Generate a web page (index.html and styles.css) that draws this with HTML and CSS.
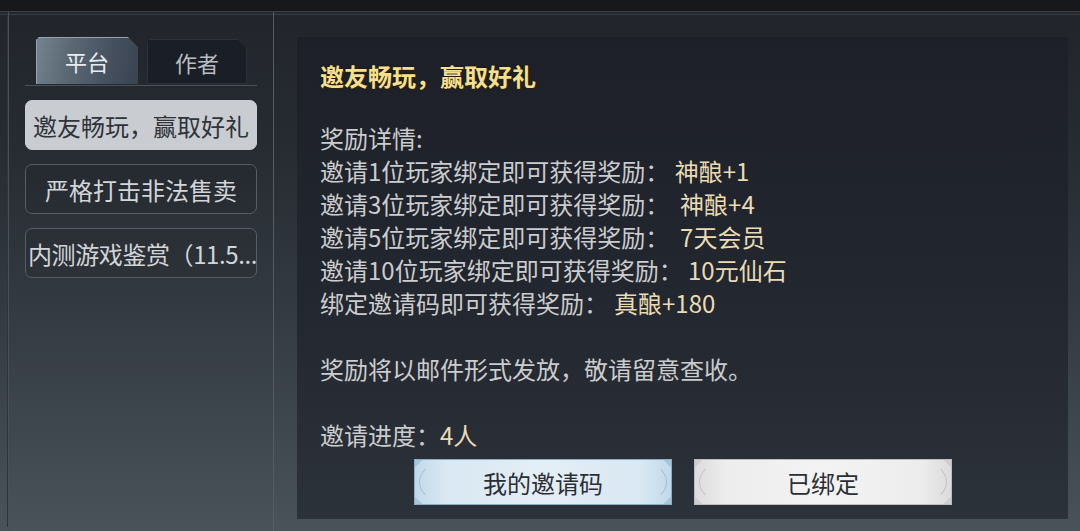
FILE: index.html
```html
<!DOCTYPE html>
<html lang="zh-CN">
<head>
<meta charset="utf-8">
<link rel="stylesheet" href="styles.css">
</head>
<body>
<div class="screen">
  <div class="topbar"></div>
  <div class="main">
    <aside class="side">
      <div class="tabs">
        <div class="tab tab-active">平台</div>
        <div class="tab tab-idle">作者</div>
      </div>
      <div class="menu">
        <div class="item item-active">邀友畅玩，赢取好礼</div>
        <div class="item">严格打击非法售卖</div>
        <div class="item item-clip">内测游戏鉴赏（11.5...</div>
      </div>
    </aside>
    <section class="content">
      <div class="panel">
        <h1 class="title">邀友畅玩，赢取好礼</h1>
        <div class="body">
          <p>奖励详情:</p>
          <p>邀请1位玩家绑定即可获得奖励： <span class="val">神酿+1</span></p>
          <p>邀请3位玩家绑定即可获得奖励：  <span class="val v-gap">神酿+4</span></p>
          <p>邀请5位玩家绑定即可获得奖励：  <span class="val v-gap">7天会员</span></p>
          <p>邀请10位玩家绑定即可获得奖励： <span class="val v-gap">10元仙石</span></p>
          <p>绑定邀请码即可获得奖励：<span class="val v-gap2">真酿+180</span></p>
          <p class="blank"></p>
          <p>奖励将以邮件形式发放，敬请留意查收。</p>
          <p class="blank"></p>
          <p>邀请进度：<span class="val">4人</span></p>
        </div>
        <div class="actions">
          <div class="btn btn-blue">我的邀请码</div>
          <div class="btn btn-white">已绑定</div>
        </div>
      </div>
    </section>
  </div>
</div>
</body>
</html>
```
FILE: styles.css
```css
* { box-sizing: border-box; margin: 0; padding: 0; }
html, body { width: 1080px; height: 531px; overflow: hidden; }
body {
  font-family: "Noto Sans CJK SC", "Noto Sans", sans-serif;
  background: linear-gradient(to bottom, #21242b 0%, #262a31 25%, #343b42 60%, #4a535a 100%);
}
.screen { display: flex; flex-direction: column; height: 531px; }
.topbar {
  height: 12px;
  background: #16181c;
  border-bottom: 1px solid #3b3f46;
  box-shadow: 0 2px 0 #24272d, 0 3px 0 #3a3e45;
  flex: none;
}
.main {
  flex: 1;
  display: flex;
  margin-left: 8px;
  border-left: 1px solid #4a5058;
  box-shadow: -5px 0 0 -4px #30343a;
}
.side {
  width: 265px;
  flex: none;
  border-right: 1px solid #555b63;
  padding: 25px 0 0 16px;
}
.tabs {
  display: flex;
  align-items: flex-end;
  gap: 9px;
  padding-left: 11px;
  width: 232px;
  border-bottom: 1px solid #4b5159;
  padding-bottom: 1px;
}
.tab {
  display: flex;
  align-items: center;
  justify-content: center;
  font-size: 22px;
  clip-path: polygon(3px 0, calc(100% - 10px) 0, 100% 10px, 100% 100%, 0 100%, 0 3px);
}
.tab-active {
  width: 102px;
  height: 47px;
  color: #e9edf0;
  background: linear-gradient(100deg, #75848f 0%, #5a6773 35%, #465160 70%, #3a4350 100%);
  box-shadow: inset 1px 1px 0 #95a3ad;
}
.tab-idle {
  width: 100px;
  height: 45px;
  color: #b9bdc3;
  background: #1a1e26;
  box-shadow: inset 0 0 0 1px #2c323b;
}
.menu {
  display: flex;
  flex-direction: column;
  gap: 14px;
  margin-top: 14px;
  width: 232px;
}
.item {
  height: 50px;
  border: 1px solid #575d65;
  border-radius: 7px;
  background: rgba(30, 34, 40, 0.25);
  color: #d2d5d8;
  font-size: 24px;
  display: flex;
  align-items: center;
  justify-content: center;
  white-space: nowrap;
  overflow: hidden;
}
.item-active {
  background: #c9ccd0;
  border-color: #c9ccd0;
  color: #2f333a;
}
.item-clip { justify-content: flex-start; padding-left: 2px; letter-spacing: -0.4px; }
.content {
  flex: 1;
  padding: 25px 12px 12px 23px;
  display: flex;
}
.panel {
  flex: 1;
  background: linear-gradient(to bottom, #1d2028 0%, #22262e 50%, #2c323a 100%);
  padding: 22px 20px 14px 23px;
  display: flex;
  flex-direction: column;
}
.title {
  font-size: 24px;
  font-weight: 700;
  line-height: 33px;
  color: #f6e08f;
  text-shadow: 0 0 2px #1a1205, 1px 1px 1px #3b2b0c;
}
.body {
  margin-top: 29px;
  color: #cbcccd;
  font-size: 24px;
  line-height: 33px;
}
.body p { white-space: pre; }
.body .blank { height: 33px; }
.val { color: #e9dbb3; }
.v-gap { margin-left: 0; }
.v-gap2 { margin-left: 6px; }
.actions {
  margin-top: 8px;
  display: flex;
  justify-content: center;
  gap: 22px;
  padding-right: 2px;
}
.btn {
  position: relative;
  width: 258px;
  height: 46px;
  display: flex;
  align-items: center;
  justify-content: center;
  font-size: 24px;
  color: #2b2f35;
}
.btn::before {
  content: "";
  position: absolute;
  inset: 3px 4px;
  border-radius: 22px / 50%;
  border: 1px solid transparent;
}
.btn::after {
  content: "";
  position: absolute;
  inset: 0;
  background:
    linear-gradient(135deg, var(--corner) 5px, transparent 5px) top left,
    linear-gradient(225deg, var(--corner) 5px, transparent 5px) top right,
    linear-gradient(45deg, var(--corner) 5px, transparent 5px) bottom left,
    linear-gradient(315deg, var(--corner) 5px, transparent 5px) bottom right;
  background-size: 12px 12px;
  background-repeat: no-repeat;
}
.btn-blue {
  --corner: #a9c5da;
  background: linear-gradient(to right, #c2d9ea 0%, #d9e8f3 12%, #e4eef6 50%, #d9e8f3 88%, #c2d9ea 100%);
  border: 1px solid #8eaec6;
}
.btn-blue::before { border-left-color: #a4c0d5; border-right-color: #a4c0d5; }
.btn-white {
  --corner: #cfcfcf;
  background: linear-gradient(to right, #dcdcdc 0%, #ededed 12%, #f3f3f3 50%, #ededed 88%, #dcdcdc 100%);
  border: 1px solid #bdbdbd;
}
.btn-white::before { border-left-color: #c4c4c4; border-right-color: #c4c4c4; }
```
